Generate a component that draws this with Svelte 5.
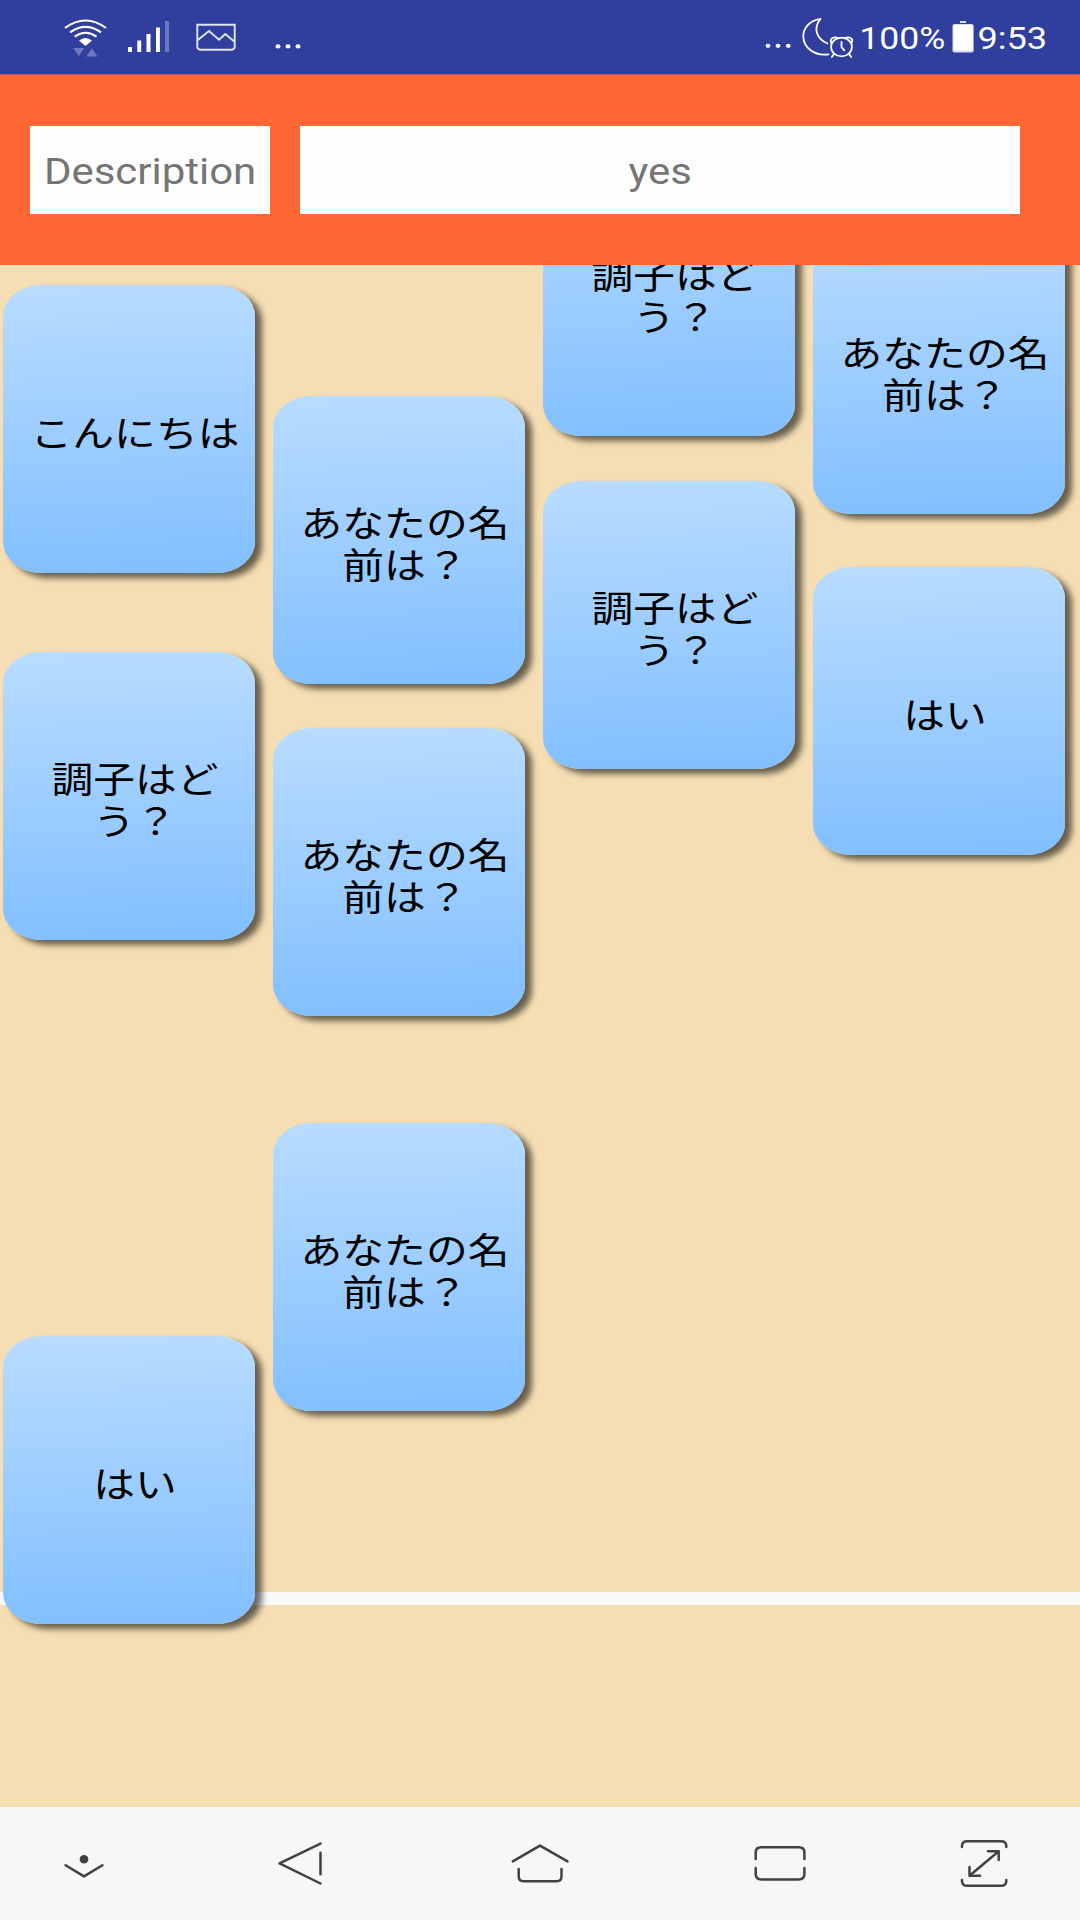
<script lang="ts">
  // Each lane lists its tiles from top to bottom; gap is the free space above a tile.
  const lanes = [
    [
      { gap: 19.5, text: ['こんにちは'] },
      { gap: 79.5, text: ['調子はど', 'う？'] },
      { gap: 396, text: ['はい'] },
    ],
    [
      { gap: 130.5, text: ['あなたの名', '前は？'] },
      { gap: 44, text: ['あなたの名', '前は？'] },
      { gap: 107, text: ['あなたの名', '前は？'] },
    ],
    [
      { gap: -117.5, text: ['調子はど', 'う？'] },
      { gap: 45.5, text: ['調子はど', 'う？'] },
    ],
    [
      { gap: -39, text: ['あなたの名', '前は？'] },
      { gap: 52.5, text: ['はい'] },
    ],
  ];
</script>

<div class="screen">
  <div class="status">
    <svg class="left" width="320" height="74" viewBox="0 0 320 74" fill="none">
      <g stroke="#fff" stroke-width="2.1">
        <path d="M65 28Q85.5 13 106 28" />
        <path d="M70 32.3Q85.5 21.5 101 32.3" />
        <path d="M74.7 36.6Q85.5 29 96.5 36.6" />
      </g>
      <path d="M79 40.5Q85.5 35.5 92 40.5L85.5 46Z" fill="#fff" />
      <path d="M73.3 48H84.3L78.8 56.3ZM86.3 56.5H97.5L91.9 48.3Z" fill="#6f78bd" />
      <path d="M128 47h4v5h-4zM137.3 40.5h3.9V52h-3.9zM146.5 34h4v18h-4zM156 27.5h3.9V52H156z" fill="#fff" />
      <path d="M165 21h4v31h-4z" fill="#6f78bd" />
      <path d="M197.3 24.7H234.7V46.5Q234.7 49.7 231 49.7H201Q197.3 49.7 197.3 46.5ZM197.5 40.3L209 31L219 39.7L225.3 34L234.5 41.8" stroke="#e1e4f4" stroke-width="1.9" />
      <g fill="#fff"><ellipse cx="278" cy="46.4" rx="2.5" ry="2.1" /><ellipse cx="288" cy="46.4" rx="2.5" ry="2.1" /><ellipse cx="298" cy="46.4" rx="2.5" ry="2.1" /></g>
    </svg>
    <div class="right">
      <svg width="96" height="74" viewBox="760 0 96 74" fill="none">
        <g fill="#fff"><ellipse cx="768" cy="45.8" rx="2.4" ry="2.1" /><ellipse cx="778" cy="45.8" rx="2.4" ry="2.1" /><ellipse cx="788.3" cy="45.8" rx="2.4" ry="2.1" /></g>
        <g stroke="#fff" stroke-width="1.8" stroke-linecap="round" stroke-linejoin="round">
          <path d="M827.5 43.5C817 39 812.5 29 820.5 18.8C809.5 20.5 803.3 28 803.3 36.3C803.3 47.5 814.5 56.5 828.5 54.3" />
          <ellipse cx="841.5" cy="47" rx="10.4" ry="9.4" />
          <path d="M831.4 43C829 38.3 834.5 36 838 38.3M845 38.3C848.5 36 854 38.3 851.6 43M834 54L831.8 57M849 54L851.2 57M841.5 42V47.2L844.3 50.3" />
        </g>
      </svg>
      <span class="battery-text">100%</span>
      <svg class="battery" width="22" height="74" viewBox="952 0 22 74">
        <path d="M960 21h6v2h-6z" fill="#d8dcf0" />
        <rect x="952.5" y="24" width="21.2" height="28.6" rx="2" fill="#d8dcf0" />
        <rect x="953.5" y="25" width="19.2" height="25.5" fill="#fff" />
      </svg>
      <span class="clock">9:53</span>
    </div>
  </div>

  <header>
    <div class="box label"><span>Description</span></div>
    <div class="box answer"><span>yes</span></div>
  </header>

  <main>
    <div class="goal"></div>
    {#each lanes as lane}
      <div class="lane">
        {#each lane as tile}
          <div class="tile" style="margin-top: {tile.gap}px">
            <p>{#each tile.text as line}<span>{line}</span>{/each}</p>
          </div>
        {/each}
      </div>
    {/each}
  </main>

  <nav>
    <svg width="60" height="61" viewBox="54 1833 60 61"><circle cx="84" cy="1859.3" r="4.3" /><path d="M65.6 1865.2L84 1876.4L102.4 1865.2" /></svg>
    <svg width="60" height="61" viewBox="270 1833 60 61"><path d="M320.5 1843.6L279.5 1863.4L320.5 1883.5M320.5 1852.7V1874.3" /></svg>
    <svg width="60" height="61" viewBox="510 1833 60 61"><path d="M512.8 1861.4L540 1845.6L567.5 1861.4M518.7 1869V1876.5Q518.7 1881.2 523.5 1881.2H557Q561.5 1881.2 561.5 1876.5V1869" /></svg>
    <svg width="60" height="61" viewBox="750 1833 60 61"><path d="M755.7 1859V1852.5Q755.7 1847.3 761.5 1847.3H798.5Q804.4 1847.3 804.4 1852.5V1859M755.7 1868V1874Q755.7 1879.5 761.5 1879.5H798.5Q804.4 1879.5 804.4 1874V1868" /></svg>
    <svg width="60" height="61" viewBox="954 1833 60 61"><path d="M962 1847V1845.5Q962.5 1841.2 967 1841.2H1001Q1005.8 1841.2 1006.3 1845.5V1847M962 1880V1881.3Q962.5 1885.8 967 1885.8H1001Q1005.8 1885.8 1006.3 1881.3V1880M988 1851.3H998.7V1860M998.7 1851.3L969.5 1875.8M969.5 1867V1875.8H980" /></svg>
  </nav>
</div>

<style>
  :global(body) {
    margin: 0;
  }
  .screen {
    display: flex;
    flex-direction: column;
    width: 1080px;
    height: 1920px;
    overflow: hidden;
    font-family: Roboto, 'Noto Sans CJK JP', sans-serif;
  }
  .status {
    display: flex;
    justify-content: space-between;
    height: 74px;
    flex: none;
    background: #303e9e;
    color: #fff;
  }
  .right {
    display: flex;
    width: 320px;
    line-height: 77px;
    font-size: 32px;
  }
  .right span {
    display: block;
    white-space: nowrap;
    transform-origin: 0 50%;
  }
  .battery-text {
    width: 96px;
    padding-left: 3px;
    box-sizing: border-box;
    transform: scaleX(1.11);
  }
  .clock {
    padding-left: 3px;
    transform: scaleX(1.13);
  }
  svg {
    display: block;
    flex: none;
  }
  header {
    display: flex;
    gap: 30px;
    flex: none;
    box-sizing: border-box;
    height: 191px;
    padding: 50.5px 60px 51.5px 30px;
    border-top: 1px solid #b05a74;
    background: #ff6633;
  }
  .box {
    display: flex;
    align-items: center;
    justify-content: center;
    height: 88px;
    background: #fdfdfd;
    color: #757575;
    font-size: 36px;
    line-height: 42px;
    white-space: nowrap;
  }
  .label {
    width: 240px;
  }
  .answer {
    width: 720px;
  }
  .box span {
    transform: translateY(2px) scaleX(1.165);
  }
  main {
    display: grid;
    grid-template-columns: repeat(4, 270px);
    grid-template-rows: 1542px;
    height: 1542px;
    flex: none;
    overflow: hidden;
    background: #f5deb3;
  }
  .goal {
    grid-area: 1 / 1 / 2 / 5;
    height: 12.5px;
    margin-top: 1327px;
    background: #fafafa;
  }
  .lane {
    grid-row: 1;
    display: flex;
    flex-direction: column;
    padding-left: 3px;
  }
  .lane:nth-child(2) { grid-column: 1; }
  .lane:nth-child(3) { grid-column: 2; }
  .lane:nth-child(4) { grid-column: 3; }
  .lane:nth-child(5) { grid-column: 4; }
  .tile {
    display: flex;
    align-items: center;
    justify-content: center;
    flex: none;
    box-sizing: border-box;
    width: 252px;
    height: 288px;
    padding: 4px 0 0 12px;
    border-radius: 39px / 31px;
    background: linear-gradient(178deg, #b9dcff, #81bfff);
    box-shadow: 7px 5px 6px rgba(0, 0, 0, 0.58);
  }
  p {
    margin: 0;
    color: #000;
    font-family: 'Noto Sans CJK JP', sans-serif;
    font-size: 36px;
    line-height: 42px;
    text-align: center;
    transform: scaleX(1.16);
  }
  p span {
    display: block;
    white-space: nowrap;
  }
  nav {
    display: grid;
    grid-template-columns: 168px 264px 216px 264px 144px;
    place-items: center;
    height: 113px;
    flex: none;
    background: #f7f7f7;
  }
  nav circle {
    fill: #424242;
  }
  nav path {
    fill: none;
    stroke: #424242;
    stroke-width: 2.5;
    stroke-linecap: round;
    stroke-linejoin: round;
  }
</style>
